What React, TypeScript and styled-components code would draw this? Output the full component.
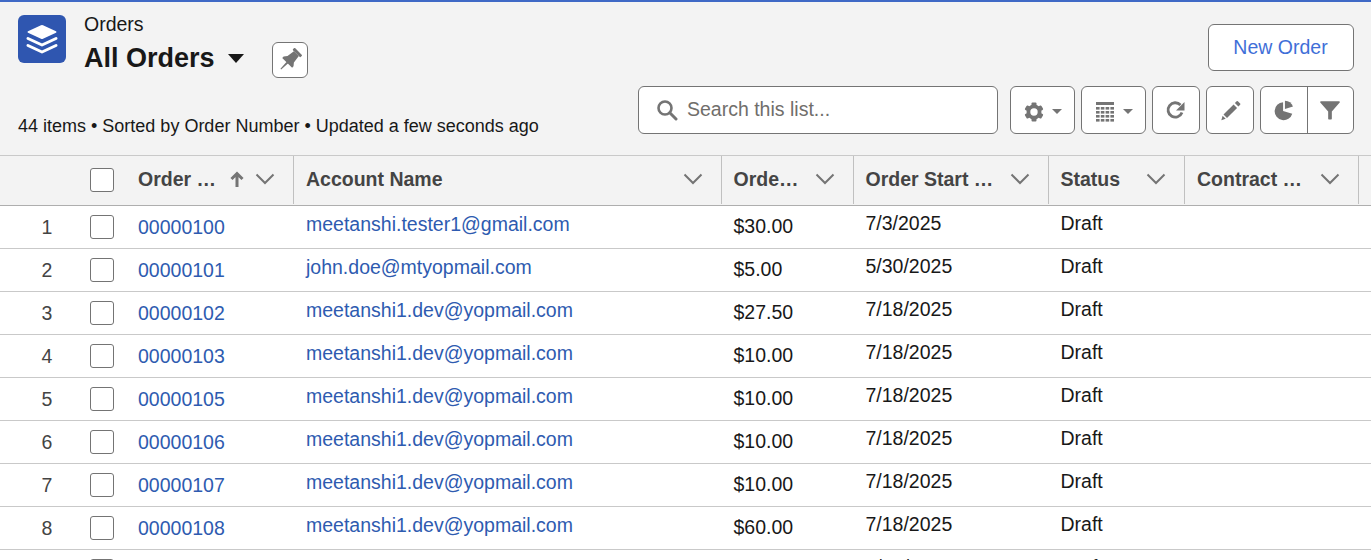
import React from "react";
import styled, { createGlobalStyle } from "styled-components";

const GlobalStyle = createGlobalStyle`
  html, body {
    margin: 0;
    height: 100%;
    overflow: hidden;
  }
  body {
    background: #fff;
    color: #181818;
    font-family: "Liberation Sans", Arial, sans-serif;
    font-size: 19.5px;
  }
  * {
    box-sizing: border-box;
  }
`;

const Page = styled.div`
  width: 1371px;
  height: 560px;
  overflow: hidden;
  border-top: 2px solid #3f69c6;
`;

const Header = styled.header`
  height: 153px;
  padding: 12px 17px 0 18px;
  background: #f3f3f3;
`;

const TopRow = styled.div`
  display: flex;
  justify-content: space-between;
  height: 64px;
`;

const TitleArea = styled.div`
  display: flex;
`;

const AppIcon = styled.div`
  width: 48px;
  height: 48px;
  margin-top: 1px;
  border-radius: 6px;
  background: #2f56b0;
  display: flex;
  align-items: center;
  justify-content: center;
`;

const TitleBlock = styled.div`
  margin-left: 18px;
`;

const ObjectName = styled.div`
  height: 20px;
  line-height: 20px;
`;

const TitleRow = styled.div`
  display: flex;
  align-items: center;
  height: 36px;
  margin-top: 8px;
`;

const ListName = styled.h1`
  margin: -4px 0 0;
  font-size: 27px;
  line-height: 32px;
  font-weight: 700;
`;

const TitleCaret = styled.span`
  width: 0;
  height: 0;
  margin: -4px 0 0 13px;
  border-left: 8px solid transparent;
  border-right: 8px solid transparent;
  border-top: 9px solid #181818;
`;

const Button = styled.button<{ $w: number }>`
  width: ${(p) => p.$w}px;
  height: 48px;
  padding: 0;
  display: flex;
  align-items: center;
  justify-content: center;
  background: #fff;
  border: 1px solid #747474;
  border-radius: 6px;
`;

const PinButton = styled(Button)`
  height: 36px;
  margin-left: 28px;
`;

const NewOrderButton = styled(Button)`
  height: 47px;
  margin-top: 10px;
  padding-right: 1px;
  font: inherit;
  color: #3f6fd8;
`;

const BottomRow = styled.div`
  display: flex;
  margin-top: 8px;
`;

const Meta = styled.div`
  flex: 1;
  margin-top: 28px;
  font-size: 18px;
  line-height: 24px;
`;

const Search = styled.div`
  width: 360px;
  height: 48px;
  margin-right: 12px;
  padding-left: 17px;
  display: flex;
  align-items: center;
  gap: 9px;
  background: #fff;
  border: 1px solid #747474;
  border-radius: 6px;
`;

const SearchText = styled.span`
  padding-bottom: 2px;
  color: #706e6b;
`;

const Toolbar = styled.div`
  display: flex;
  gap: 6px;
`;

const SmallCaret = styled.span`
  width: 0;
  height: 0;
  margin: 2px 0 0 8px;
  border-left: 5px solid transparent;
  border-right: 5px solid transparent;
  border-top: 5px solid #747474;
`;

const ButtonGroup = styled.div`
  display: flex;
  width: 94px;
  height: 48px;
  background: #fff;
  border: 1px solid #747474;
  border-radius: 6px;
`;

const GroupItem = styled.div<{ $divider?: boolean }>`
  flex: 1;
  display: flex;
  align-items: center;
  justify-content: center;
  border-left: ${(p) => (p.$divider ? "1px solid #747474" : "none")};
`;

const DropIcon = styled.span`
  display: flex;
  margin-top: 3px;
`;

const Table = styled.table`
  width: 1371px;
  table-layout: fixed;
  border-collapse: separate;
  border-spacing: 0;
  background: #fff;
`;

const HeadCell = styled.th<{ $w?: number }>`
  width: ${(p) => (p.$w ? `${p.$w}px` : "auto")};
  height: 51px;
  padding: 0;
  background: #f3f3f3;
  border-top: 1px solid #c9c9c9;
  border-bottom: 1px solid #aeaeae;
  vertical-align: top;
  text-align: left;
`;

const HeadInner = styled.div<{ $left?: number }>`
  height: 48px;
  padding: 0 18px 2px ${(p) => p.$left ?? 12}px;
  display: flex;
  align-items: center;
  justify-content: space-between;
  font-size: 19.5px;
  font-weight: 700;
  color: #444;
  border-right: 1px solid #c0c0c0;
`;

const HeadIcons = styled.span`
  display: flex;
  align-items: center;
  gap: 10px;
`;

const Cell = styled.td<{ $top?: number; $left?: number; $right?: number; $align?: string; $color?: string }>`
  height: 43px;
  padding: ${(p) => p.$top ?? 5}px ${(p) => p.$right ?? 12}px 0 ${(p) => p.$left ?? 12}px;
  line-height: 24px;
  vertical-align: top;
  text-align: ${(p) => p.$align ?? "left"};
  color: ${(p) => p.$color ?? "#181818"};
  border-bottom: 1px solid #c9c9c9;
  white-space: nowrap;
`;

const Link = styled.a`
  color: #2e5bb0;
  text-decoration: none;
`;

const Check = styled.span`
  display: block;
  width: 24px;
  height: 24px;
  background: #fff;
  border: 1px solid #747474;
  border-radius: 3px;
`;

const HeadCheckWrap = styled.div`
  height: 48px;
  display: flex;
  align-items: center;
  padding-left: 12px;
`;

const GREY = "#747474";

const Chevron = () => (
  <svg width="20" height="12" viewBox="0 0 20 12">
    <path d="M1.500 1.500 10 10l8.500-8.500" fill="none" stroke={GREY} strokeWidth="2" />
  </svg>
);

const SortArrow = () => (
  <svg width="16" height="17" viewBox="0 0 16 17">
    <path d="M8 16V3M2.500 8 8 2.500 13.500 8" fill="none" stroke={GREY} strokeWidth="3" />
  </svg>
);

const LayersIcon = () => (
  <svg width="48" height="48" viewBox="0 0 48 48">
    <path d="M23 10.300a2 2 0 0 1 2 0l13 6a.8.800 0 0 1 0 1.400l-13 6a2 2 0 0 1-2 0l-13-6a.8.800 0 0 1 0-1.400z" fill="#fff" />
    <path d="M10 23.500 24 30l14-6.500M10 30.500 24 37l14-6.500" fill="none" stroke="#fff" strokeWidth="3" strokeLinecap="round" strokeLinejoin="round" />
  </svg>
);

const PinIcon = () => (
  <svg width="24" height="24" viewBox="0 0 24 24">
    <g transform="rotate(45 12 12)" fill={GREY}>
      <rect x="6.500" y="0" width="11" height="3" rx="1" />
      <path d="M8.500 3h7l1 8 2.500 3v2H5v-2l2.500-3zM11 16h2l-.5 9h-1z" />
    </g>
  </svg>
);

const SearchIcon = () => (
  <svg width="22" height="22" viewBox="0 0 22 22">
    <circle cx="9" cy="9" r="6.500" fill="none" stroke={GREY} strokeWidth="2.600" />
    <path d="m13.800 13.800 6.200 6.200" stroke={GREY} strokeWidth="3" strokeLinecap="round" />
  </svg>
);

const GearIcon = () => (
  <svg width="20" height="20" viewBox="0 0 20 20">
    <circle cx="10" cy="10" r="5.600" fill="none" stroke={GREY} strokeWidth="3.800" />
    {[0, 60, 120, 180, 240, 300].map((a) => (
      <rect key={a} x="7.500" y="0.500" width="5" height="4" rx="1" fill={GREY} transform={`rotate(${a} 10 10)`} />
    ))}
  </svg>
);

const TableIcon = () => (
  <svg width="20" height="22" viewBox="0 0 20 22">
    <rect x="1" y="1" width="18" height="3" fill={GREY} />
    {[6, 10, 14, 18].map((y) =>
      [1, 5.800, 10.600, 15.400].map((x) => (
        <rect key={`${x}-${y}`} x={x} y={y} width="3.600" height="2.600" fill={GREY} />
      ))
    )}
  </svg>
);

const RefreshIcon = () => (
  <svg width="22" height="22" viewBox="0 0 22 22">
    <path d="M15.500 6A7.200 7.200 0 1 0 17 13.500" fill="none" stroke={GREY} strokeWidth="2.800" />
    <path d="M19.500 3v8.500H11z" fill={GREY} />
  </svg>
);

const PencilIcon = () => (
  <svg width="21" height="21" viewBox="0 0 24 24">
    <g fill={GREY}>
      <path d="m17 3.500 2-2a1 1 0 0 1 1.400 0l2.600 2.600a1 1 0 0 1 0 1.400l-2 2z" />
      <path d="m15.500 5 4 4L8 20.500l-4-4z" />
      <path d="m3 18 3.500 3.500L1.500 23z" />
    </g>
  </svg>
);

const PieIcon = () => (
  <svg width="22" height="22" viewBox="0 0 24 24">
    <g fill={GREY}>
      <path d="M11 3.500A9.800 9.800 0 1 0 21 16l-10-3z" />
      <path d="M13 1.800a9.800 9.800 0 0 1 8.800 6.400L13 11z" />
    </g>
  </svg>
);

const FilterIcon = () => (
  <svg width="22" height="22" viewBox="0 0 24 24">
    <path d="M2 2.500h20a.8.800 0 0 1 .6 1.300L14 13.500v8a.8.800 0 0 1-.8.800h-2.400a.8.800 0 0 1-.8-.8v-8L1.400 3.800A.8.800 0 0 1 2 2.500z" fill={GREY} />
  </svg>
);

interface Order {
  number: string;
  account: string;
  amount: string;
  start: string;
}

const shared = "meetanshi1.dev@yopmail.com";

const orders: Order[] = [
  { number: "00000100", account: "meetanshi.tester1@gmail.com", amount: "$30.00", start: "7/3/2025" },
  { number: "00000101", account: "john.doe@mtyopmail.com", amount: "$5.00", start: "5/30/2025" },
  { number: "00000102", account: shared, amount: "$27.50", start: "7/18/2025" },
  { number: "00000103", account: shared, amount: "$10.00", start: "7/18/2025" },
  { number: "00000105", account: shared, amount: "$10.00", start: "7/18/2025" },
  { number: "00000106", account: shared, amount: "$10.00", start: "7/18/2025" },
  { number: "00000107", account: shared, amount: "$10.00", start: "7/18/2025" },
  { number: "00000108", account: shared, amount: "$60.00", start: "7/18/2025" },
  { number: "00000109", account: shared, amount: "$10.00", start: "7/18/2025" },
];

const columns = [
  { label: "Account Name", w: 428, left: 12 },
  { label: "Orde…", w: 132, left: 11.5 },
  { label: "Order Start …", w: 195, left: 11.5 },
  { label: "Status", w: 136, left: 11.5 },
  { label: "Contract …", w: 174, left: 12 },
];

export default function App() {
  return (
    <Page>
      <GlobalStyle />
      <Header>
        <TopRow>
          <TitleArea>
            <AppIcon>
              <LayersIcon />
            </AppIcon>
            <TitleBlock>
              <ObjectName>Orders</ObjectName>
              <TitleRow>
                <ListName>All Orders</ListName>
                <TitleCaret />
                <PinButton $w={36}>
                  <PinIcon />
                </PinButton>
              </TitleRow>
            </TitleBlock>
          </TitleArea>
          <NewOrderButton $w={146}>New Order</NewOrderButton>
        </TopRow>
        <BottomRow>
          <Meta>44 items • Sorted by Order Number • Updated a few seconds ago</Meta>
          <Search>
            <SearchIcon />
            <SearchText>Search this list...</SearchText>
          </Search>
          <Toolbar>
            <Button $w={65}>
              <DropIcon>
                <GearIcon />
              </DropIcon>
              <SmallCaret />
            </Button>
            <Button $w={65}>
              <DropIcon>
                <TableIcon />
              </DropIcon>
              <SmallCaret />
            </Button>
            <Button $w={48}>
              <RefreshIcon />
            </Button>
            <Button $w={48}>
              <PencilIcon />
            </Button>
            <ButtonGroup>
              <GroupItem>
                <PieIcon />
              </GroupItem>
              <GroupItem $divider>
                <FilterIcon />
              </GroupItem>
            </ButtonGroup>
          </Toolbar>
        </BottomRow>
      </Header>
      <Table>
        <thead>
          <tr>
            <HeadCell $w={78} />
            <HeadCell $w={48}>
              <HeadCheckWrap>
                <Check />
              </HeadCheckWrap>
            </HeadCell>
            <HeadCell $w={168}>
              <HeadInner>
                Order …
                <HeadIcons>
                  <SortArrow />
                  <Chevron />
                </HeadIcons>
              </HeadInner>
            </HeadCell>
            {columns.map((c) => (
              <HeadCell $w={c.w} key={c.label}>
                <HeadInner $left={c.left}>
                  {c.label}
                  <Chevron />
                </HeadInner>
              </HeadCell>
            ))}
            <HeadCell />
          </tr>
        </thead>
        <tbody>
          {orders.map((o, i) => (
            <tr key={o.number}>
              <Cell $top={9} $left={16} $right={0} $align="center" $color="#444">
                {i + 1}
              </Cell>
              <Cell $top={9}>
                <Check />
              </Cell>
              <Cell $top={9}>
                <Link>{o.number}</Link>
              </Cell>
              <Cell $top={6}>
                <Link>{o.account}</Link>
              </Cell>
              <Cell $top={8} $left={11.5}>
                {o.amount}
              </Cell>
              <Cell $left={11.5}>{o.start}</Cell>
              <Cell $left={11.5}>Draft</Cell>
              <Cell />
              <Cell />
            </tr>
          ))}
        </tbody>
      </Table>
    </Page>
  );
}
